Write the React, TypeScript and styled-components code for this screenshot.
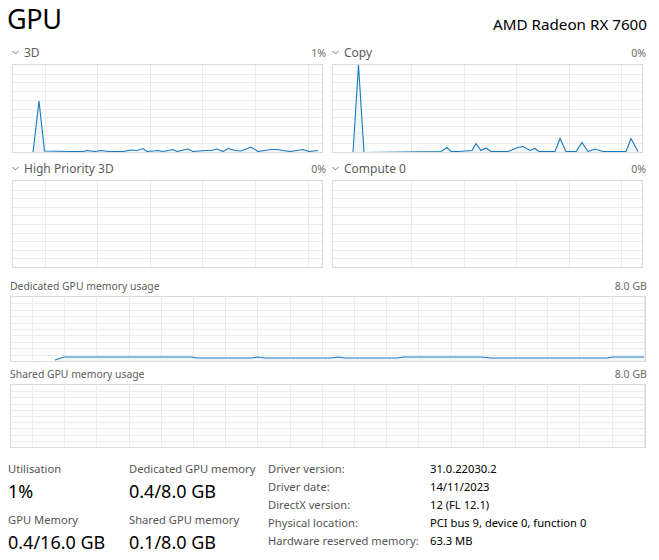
import React from "react";
import styled, { createGlobalStyle } from "styled-components";

const Global = createGlobalStyle`
  html, body { margin: 0; padding: 0; background: #ffffff; }
  body { font-family: "Segoe UI", "Noto Sans", "Open Sans", sans-serif; color: #000; }
`;

const Page = styled.div`
  width: 659px;
  height: 560px;
  box-sizing: border-box;
  padding: 0 14px 0 7px;
  overflow: hidden;
  display: flex;
  flex-direction: column;
`;

const Header = styled.div`
  display: flex;
  justify-content: space-between;
  align-items: flex-end;
  height: 38px;
`;

const Title = styled.h1`
  margin: 0;
  font-size: 27px;
  font-weight: 400;
  line-height: 38px;
  letter-spacing: -0.4px;
`;

const DeviceName = styled.div`
  font-size: 15.2px;
  line-height: 22px;
  padding-bottom: 3px;
  margin-right: -2px;
`;

const EngineGrid = styled.div`
  display: grid;
  grid-template-columns: 311px 311px;
  column-gap: 9px;
  row-gap: 4px;
  margin-left: 5px;
  margin-top: 3px;
`;

const ChartBlock = styled.div`
  display: flex;
  flex-direction: column;
`;

const ChartHead = styled.div<{ $small?: boolean }>`
  display: flex;
  justify-content: space-between;
  align-items: center;
  height: ${(p) => (p.$small ? "20px" : "23px")};
  font-size: ${(p) => (p.$small ? "10.4px" : "12px")};
  color: #5c5c5c;
`;

const HeadLeft = styled.span`
  display: flex;
  align-items: center;
  gap: 5px;
`;

const Pct = styled.span<{ $shift: number }>`
  color: #6a6a6a;
  font-size: 10.6px;
  margin-right: ${(p) => -p.$shift}px;
`;

const ChartBox = styled.div<{ $h: number }>`
  height: ${(p) => p.$h}px;
  border: 1px solid #dadada;
  box-sizing: border-box;
  background: #fff;
  svg { display: block; }
`;

const MemoryArea = styled.div`
  margin-top: 8px;
  margin-left: 3px;
  margin-right: -1px;
  display: flex;
  flex-direction: column;
  gap: 2px;
`;

const Stats = styled.div`
  display: flex;
  margin-top: 13px;
  margin-left: 1px;
`;

const StatCol = styled.div<{ $w: number }>`
  width: ${(p) => p.$w}px;
  display: flex;
  flex-direction: column;
`;

const StatLabel = styled.div`
  font-size: 11.2px;
  line-height: 16px;
  color: #555;
`;

const StatValue = styled.div`
  font-size: 18px;
  line-height: 28px;
  margin-bottom: 7px;
`;

const Details = styled.div`
  display: grid;
  grid-template-columns: 162px auto;
  grid-auto-rows: 18px;
  font-size: 11.2px;
  line-height: 16px;
`;

const DKey = styled.div`
  color: #555;
  white-space: nowrap;
`;

const DVal = styled.div`
  color: #000;
  white-space: nowrap;
`;

const Chevron = () => (
  <svg width="7" height="5" viewBox="0 0 7 5">
    <path d="M0.5 1 L3.5 4 L6.5 1" fill="none" stroke="#777" strokeWidth="1" />
  </svg>
);

type Pt = [number, number];

function Chart({
  w,
  h,
  cols,
  phase,
  rows,
  pts,
}: {
  w: number;
  h: number;
  cols: number;
  phase: number;
  rows: number;
  pts?: Pt[];
}) {
  const iw = w - 2;
  const ih = h - 2;
  const vlines: number[] = [];
  for (let x = phase; x < iw; x += cols) vlines.push(Math.round(x) + 0.5);
  const hlines: number[] = [];
  for (let i = 1; i < rows; i++) hlines.push(Math.round((ih * i) / rows) + 0.5);
  const line = pts ? pts.map((p) => `${p[0]},${p[1]}`).join(" ") : "";
  const area = pts
    ? `${pts[0][0]},${ih} ${line} ${pts[pts.length - 1][0]},${ih}`
    : "";
  return (
    <ChartBox $h={h}>
      <svg width={iw} height={ih}>
        {vlines.map((x) => (
          <line key={"v" + x} x1={x} x2={x} y1={0} y2={ih} stroke="#ebebeb" strokeWidth="1" />
        ))}
        {hlines.map((y) => (
          <line key={"h" + y} x1={0} x2={iw} y1={y} y2={y} stroke="#ebebeb" strokeWidth="1" />
        ))}
        {pts && <polygon points={area} fill="#f1f6fa" />}
        {pts && <polyline points={line} fill="none" stroke="#1979be" strokeWidth="1.1" />}
      </svg>
    </ChartBox>
  );
}

const B = 86.5;
const d3: Pt[] = [
  [20, B + 1], [26, 36], [31.5, B - 0.5], [60, B], [70, B], [74, B - 1], [82, B], [88, B - 1], [96, B], [110, B], [118, B - 1.5], [124, B - 1], [130, B - 3], [134, B], [145, B - 1], [150, B], [160, B - 2], [164, B], [175, B - 2.5], [180, B], [192, B - 1], [198, B - 1], [204, B - 2.5], [210, B], [215, B - 3], [222, B - 1], [228, B - 0.5], [238, B - 4.5], [245, B], [258, B - 2], [264, B - 2], [270, B - 1], [277, B], [290, B - 2], [296, B], [305, B - 1],
];
const cp: Pt[] = [
  [20, B + 1], [25.5, 0], [31, B + 1], [108, B], [114, B - 4], [118, B], [125, B], [139, B - 1], [143, B - 8], [148, B - 1], [153, B - 3.5], [158, B], [175, B], [185, B - 4], [190, B - 5], [197, B - 1], [202, B - 3], [206, B], [222, B], [227, B - 13], [233, B], [243, B], [249, B - 9], [255, B], [262, B - 2.5], [270, B], [293, B], [298, B - 13], [305, B],
];
const MB = 62;
const ded: Pt[] = [
  [44, MB + 1], [53, MB - 2], [180, MB - 2], [186, MB - 1], [240, MB - 1], [247, MB - 2], [254, MB - 1], [320, MB - 1], [327, MB - 2], [334, MB - 1], [386, MB - 1], [392, MB - 2], [470, MB - 2], [480, MB - 1], [596, MB - 1], [602, MB - 2], [633, MB - 2],
];

export default function App() {
  return (
    <>
      <Global />
      <Page>
        <Header>
          <Title>GPU</Title>
          <DeviceName>AMD Radeon RX 7600</DeviceName>
        </Header>
        <EngineGrid>
          <ChartBlock>
            <ChartHead>
              <HeadLeft>
                <Chevron />
                3D
              </HeadLeft>
              <Pct $shift={3}>1%</Pct>
            </ChartHead>
            <Chart w={311} h={89} cols={52.6} phase={31.5} rows={10} pts={d3} />
          </ChartBlock>
          <ChartBlock>
            <ChartHead>
              <HeadLeft>
                <Chevron />
                Copy
              </HeadLeft>
              <Pct $shift={3}>0%</Pct>
            </ChartHead>
            <Chart w={311} h={89} cols={52.6} phase={78} rows={10} pts={cp} />
          </ChartBlock>
          <ChartBlock>
            <ChartHead>
              <HeadLeft>
                <Chevron />
                High Priority 3D
              </HeadLeft>
              <Pct $shift={3}>0%</Pct>
            </ChartHead>
            <Chart w={311} h={88} cols={52.6} phase={31.5} rows={10} />
          </ChartBlock>
          <ChartBlock>
            <ChartHead>
              <HeadLeft>
                <Chevron />
                Compute 0
              </HeadLeft>
              <Pct $shift={3}>0%</Pct>
            </ChartHead>
            <Chart w={311} h={88} cols={52.6} phase={78} rows={10} />
          </ChartBlock>
        </EngineGrid>
        <MemoryArea>
          <ChartBlock>
            <ChartHead $small>
              <span>Dedicated GPU memory usage</span>
              <Pct $shift={1}>8.0 GB</Pct>
            </ChartHead>
            <Chart w={636} h={66} cols={32.2} phase={21} rows={10} pts={ded} />
          </ChartBlock>
          <ChartBlock>
            <ChartHead $small>
              <span>Shared GPU memory usage</span>
              <Pct $shift={1}>8.0 GB</Pct>
            </ChartHead>
            <Chart w={636} h={64} cols={32.2} phase={21} rows={10} />
          </ChartBlock>
        </MemoryArea>
        <Stats>
          <StatCol $w={121}>
            <StatLabel>Utilisation</StatLabel>
            <StatValue>1%</StatValue>
            <StatLabel>GPU Memory</StatLabel>
            <StatValue>0.4/16.0 GB</StatValue>
          </StatCol>
          <StatCol $w={139}>
            <StatLabel>Dedicated GPU memory</StatLabel>
            <StatValue>0.4/8.0 GB</StatValue>
            <StatLabel>Shared GPU memory</StatLabel>
            <StatValue>0.1/8.0 GB</StatValue>
          </StatCol>
          <Details>
            <DKey>Driver version:</DKey>
            <DVal>31.0.22030.2</DVal>
            <DKey>Driver date:</DKey>
            <DVal>14/11/2023</DVal>
            <DKey>DirectX version:</DKey>
            <DVal>12 (FL 12.1)</DVal>
            <DKey>Physical location:</DKey>
            <DVal>PCI bus 9, device 0, function 0</DVal>
            <DKey>Hardware reserved memory:</DKey>
            <DVal>63.3 MB</DVal>
          </Details>
        </Stats>
      </Page>
    </>
  );
}
